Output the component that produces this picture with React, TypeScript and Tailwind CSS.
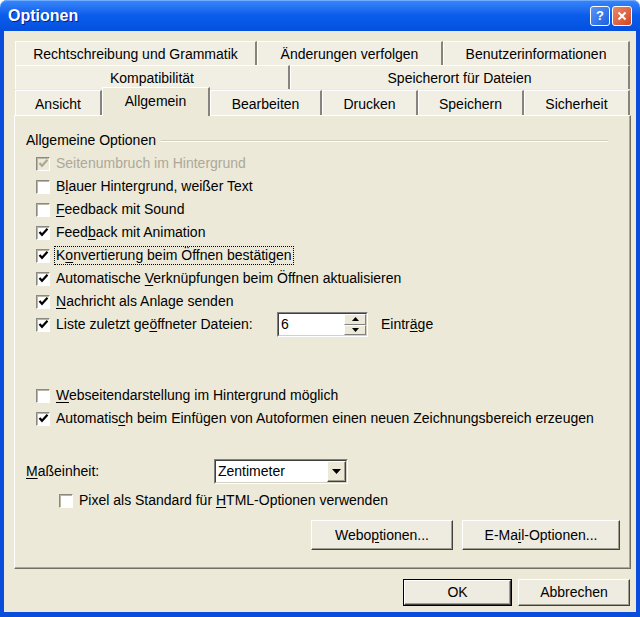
import React from "react";

type CheckProps = { checked?: boolean; disabled?: boolean };

function Check({ checked, disabled }: CheckProps) {
  return (
    <span
      className={`inline-flex w-[14px] h-[14px] shrink-0 items-center justify-center border border-t-[#8C8A80] border-l-[#8C8A80] border-r-white border-b-white shadow-[inset_1px_1px_0_#B9B6A8] ${
        disabled ? "bg-[#ECE9D8]" : "bg-white"
      }`}
    >
      {checked && (
        <svg width="11" height="11" viewBox="0 0 11 11">
          <path
            d="M1.5 5 L4 7.8 L9.5 1.8"
            fill="none"
            stroke={disabled ? "#ACA899" : "#000"}
            strokeWidth="2.2"
          />
        </svg>
      )}
    </span>
  );
}

function Row({ checked, disabled, children }: { checked?: boolean; disabled?: boolean; children: React.ReactNode }) {
  return (
    <div className="h-[23px] flex items-center pl-[10px] gap-[6px]">
      <Check checked={checked} disabled={disabled} />
      <span className={disabled ? "text-[#ACA899]" : "text-black"}>{children}</span>
    </div>
  );
}

function U({ children }: { children: React.ReactNode }) {
  return <span className="underline underline-offset-2">{children}</span>;
}

function Tab({ label, w, selected }: { label: string; w: number; selected?: boolean }) {
  return (
    <div
      style={{ width: w }}
      className={`flex items-center justify-center border-t border-l border-t-white border-l-white border-r-2 border-r-[#85837A] ${
        selected ? "h-[29px] bg-[#ECE9D8] relative z-10 -mb-[1px] pb-[1px]" : "h-full bg-[#F1EFE4] pt-[2px]"
      }`}
    >
      {label}
    </div>
  );
}

function Btn({ children, w, h, def }: { children: React.ReactNode; w: string; h: string; def?: boolean }) {
  return (
    <div className={`${w} ${h} ${def ? "border border-black" : ""} flex`}>
      <div className="flex-1 flex items-center justify-center bg-[#EEEBE1] border border-t-white border-l-white border-r-[#404040] border-b-[#404040] shadow-[inset_-1px_-1px_0_#A09D91]">
        {children}
      </div>
    </div>
  );
}

export default function App() {
  return (
    <div className="w-[640px] h-[617px] flex flex-col font-['Liberation_Sans',Arial,sans-serif] text-[14px] text-black select-none">
      {/* title bar */}
      <div className="h-[31px] shrink-0 flex items-center rounded-t-[7px] bg-gradient-to-b from-[#3A86FA] via-[#0A5CEB] to-[#0550DE] shadow-[inset_0_1px_0_#6FACFF] pl-[8px] pr-[8px]">
        <span className="text-white font-bold text-[16px] [text-shadow:1px_1px_0_#0A1E8C]">Optionen</span>
        <div className="ml-auto flex gap-[2px]">
          <div className="w-[20px] h-[20px] rounded-[3px] border border-white bg-gradient-to-br from-[#5A95F5] to-[#1C5FE0] flex items-center justify-center text-white font-bold text-[13px]">
            ?
          </div>
          <div className="w-[20px] h-[20px] rounded-[3px] border border-white bg-gradient-to-br from-[#E8876A] to-[#D2451F] flex items-center justify-center">
            <svg width="10" height="10" viewBox="0 0 10 10">
              <path d="M1.5 1.5 L8.5 8.5 M8.5 1.5 L1.5 8.5" stroke="#fff" strokeWidth="2" />
            </svg>
          </div>
        </div>
      </div>

      {/* window body */}
      <div className="flex-1 flex flex-col bg-[#ECE9D8] border-l-4 border-r-4 border-b-[5px] border-[#0A4CDC] pt-[10px] pb-[6px]">
        {/* tabs */}
        <div className="ml-[11px] w-[615px] flex flex-col">
          <div className="h-[24px] flex">
            <Tab label="Rechtschreibung und Grammatik" w={242} />
            <Tab label="Änderungen verfolgen" w={186} />
            <Tab label="Benutzerinformationen" w={187} />
          </div>
          <div className="h-[24px] flex">
            <Tab label="Kompatibilität" w={275} />
            <Tab label="Speicherort für Dateien" w={340} />
          </div>
          <div className="h-[28px] -mt-[2px] flex items-end relative">
            <div className="h-[25px] flex">
              <Tab label="Ansicht" w={87} />
            </div>
            <Tab label="Allgemein" w={108} selected />
            <div className="h-[25px] flex">
              <Tab label="Bearbeiten" w={112} />
              <Tab label="Drucken" w={96} />
              <Tab label="Speichern" w={106} />
              <Tab label="Sicherheit" w={106} />
            </div>
          </div>
        </div>

        {/* panel */}
        <div className="ml-[10px] w-[617px] h-[454px] shrink-0 flex flex-col border border-t-white border-l-white border-r-[#716F64] border-b-[#716F64] shadow-[inset_-1px_-1px_0_#ACA899] pl-[11px] pt-[13px]">
          <div className="h-[23px] flex items-center">
            <span>Allgemeine Optionen</span>
            <div className="flex-1 ml-[5px] mr-[22px] h-[2px] border-t border-t-[#D0D0BF] border-b border-b-white" />
          </div>
          <Row checked disabled>
            Seitenumbruch im Hintergrund
          </Row>
          <Row>
            B<U>l</U>auer Hintergrund, weißer Text
          </Row>
          <Row>
            <U>F</U>eedback mit Sound
          </Row>
          <Row checked>
            Feed<U>b</U>ack mit Animation
          </Row>
          <div className="h-[23px] flex items-center pl-[10px] gap-[5px]">
            <Check checked />
            <span className="outline outline-1 outline-dotted outline-black px-[1px] leading-[17px]">
              K<U>o</U>nvertierung beim Öffnen bestätigen
            </span>
          </div>
          <Row checked>
            Automatische <U>V</U>erknüpfungen beim Öffnen aktualisieren
          </Row>
          <Row checked>
            <U>N</U>achricht als Anlage senden
          </Row>
          <div className="h-[23px] flex items-center pl-[10px]">
            <Check checked />
            <span className="ml-[6px] w-[221px]">
              Liste zuletzt ge<U>ö</U>ffneter Dateien:
            </span>
            <div className="w-[91px] h-[25px] flex border border-t-[#808080] border-l-[#808080] border-r-white border-b-white">
              <div className="flex-1 flex border border-t-[#404040] border-l-[#404040] border-r-[#D4D0C8] border-b-[#D4D0C8] bg-white">
                <span className="flex-1 pl-[2px] flex items-center">6</span>
                <div className="w-[22px] flex flex-col">
                  <div className="flex-1 flex items-center justify-center bg-[#ECE9D8] border border-t-white border-l-white border-r-[#808080] border-b-[#808080]">
                    <svg width="7" height="4" viewBox="0 0 7 4">
                      <path d="M3.5 0 L7 4 L0 4 Z" fill="#000" />
                    </svg>
                  </div>
                  <div className="flex-1 flex items-center justify-center bg-[#ECE9D8] border border-t-white border-l-white border-r-[#808080] border-b-[#808080]">
                    <svg width="7" height="4" viewBox="0 0 7 4">
                      <path d="M0 0 L7 0 L3.5 4 Z" fill="#000" />
                    </svg>
                  </div>
                </div>
              </div>
            </div>
            <span className="ml-[13px]">
              Eintr<U>ä</U>ge
            </span>
          </div>

          <div className="mt-[48px]">
            <Row>
              <U>W</U>ebseitendarstellung im Hintergrund möglich
            </Row>
            <Row checked>
              Automatis<U>c</U>h beim Einfügen von Autoformen einen neuen Zeichnungsbereich erzeugen
            </Row>
          </div>

          <div className="mt-[29px] h-[25px] flex items-center">
            <span className="w-[188px]">
              <U>M</U>aßeinheit:
            </span>
            <div className="w-[134px] h-[25px] flex border border-t-[#808080] border-l-[#808080] border-r-white border-b-white">
              <div className="flex-1 flex border border-t-[#404040] border-l-[#404040] border-r-[#D4D0C8] border-b-[#D4D0C8] bg-white">
                <span className="flex-1 pl-[2px] flex items-center">Zentimeter</span>
                <div className="w-[19px] flex items-center justify-center bg-[#ECE9D8] border border-t-white border-l-white border-r-[#404040] border-b-[#404040] shadow-[inset_-1px_-1px_0_#A09D91]">
                  <svg width="9" height="5" viewBox="0 0 9 5">
                    <path d="M0 0 L9 0 L4.5 5 Z" fill="#000" />
                  </svg>
                </div>
              </div>
            </div>
          </div>

          <div className="mt-[5px] h-[23px] flex items-center pl-[33px] gap-[6px]">
            <Check />
            <span>
              Pixel als Standard für <U>H</U>TML-Optionen verwenden
            </span>
          </div>

          <div className="mt-[8px] flex justify-end gap-[9px] pr-[10px]">
            <Btn w="w-[142px]" h="h-[30px]">
              Webo<U>p</U>tionen...
            </Btn>
            <Btn w="w-[158px]" h="h-[30px]">
              E-Ma<U>i</U>l-Optionen...
            </Btn>
          </div>
        </div>

        {/* dialog buttons */}
        <div className="mt-[10px] flex justify-end gap-[6px] pr-[6px]">
          <Btn w="w-[109px]" h="h-[27px]" def>
            OK
          </Btn>
          <Btn w="w-[112px]" h="h-[27px]">
            Abbrechen
          </Btn>
        </div>
      </div>
    </div>
  );
}
